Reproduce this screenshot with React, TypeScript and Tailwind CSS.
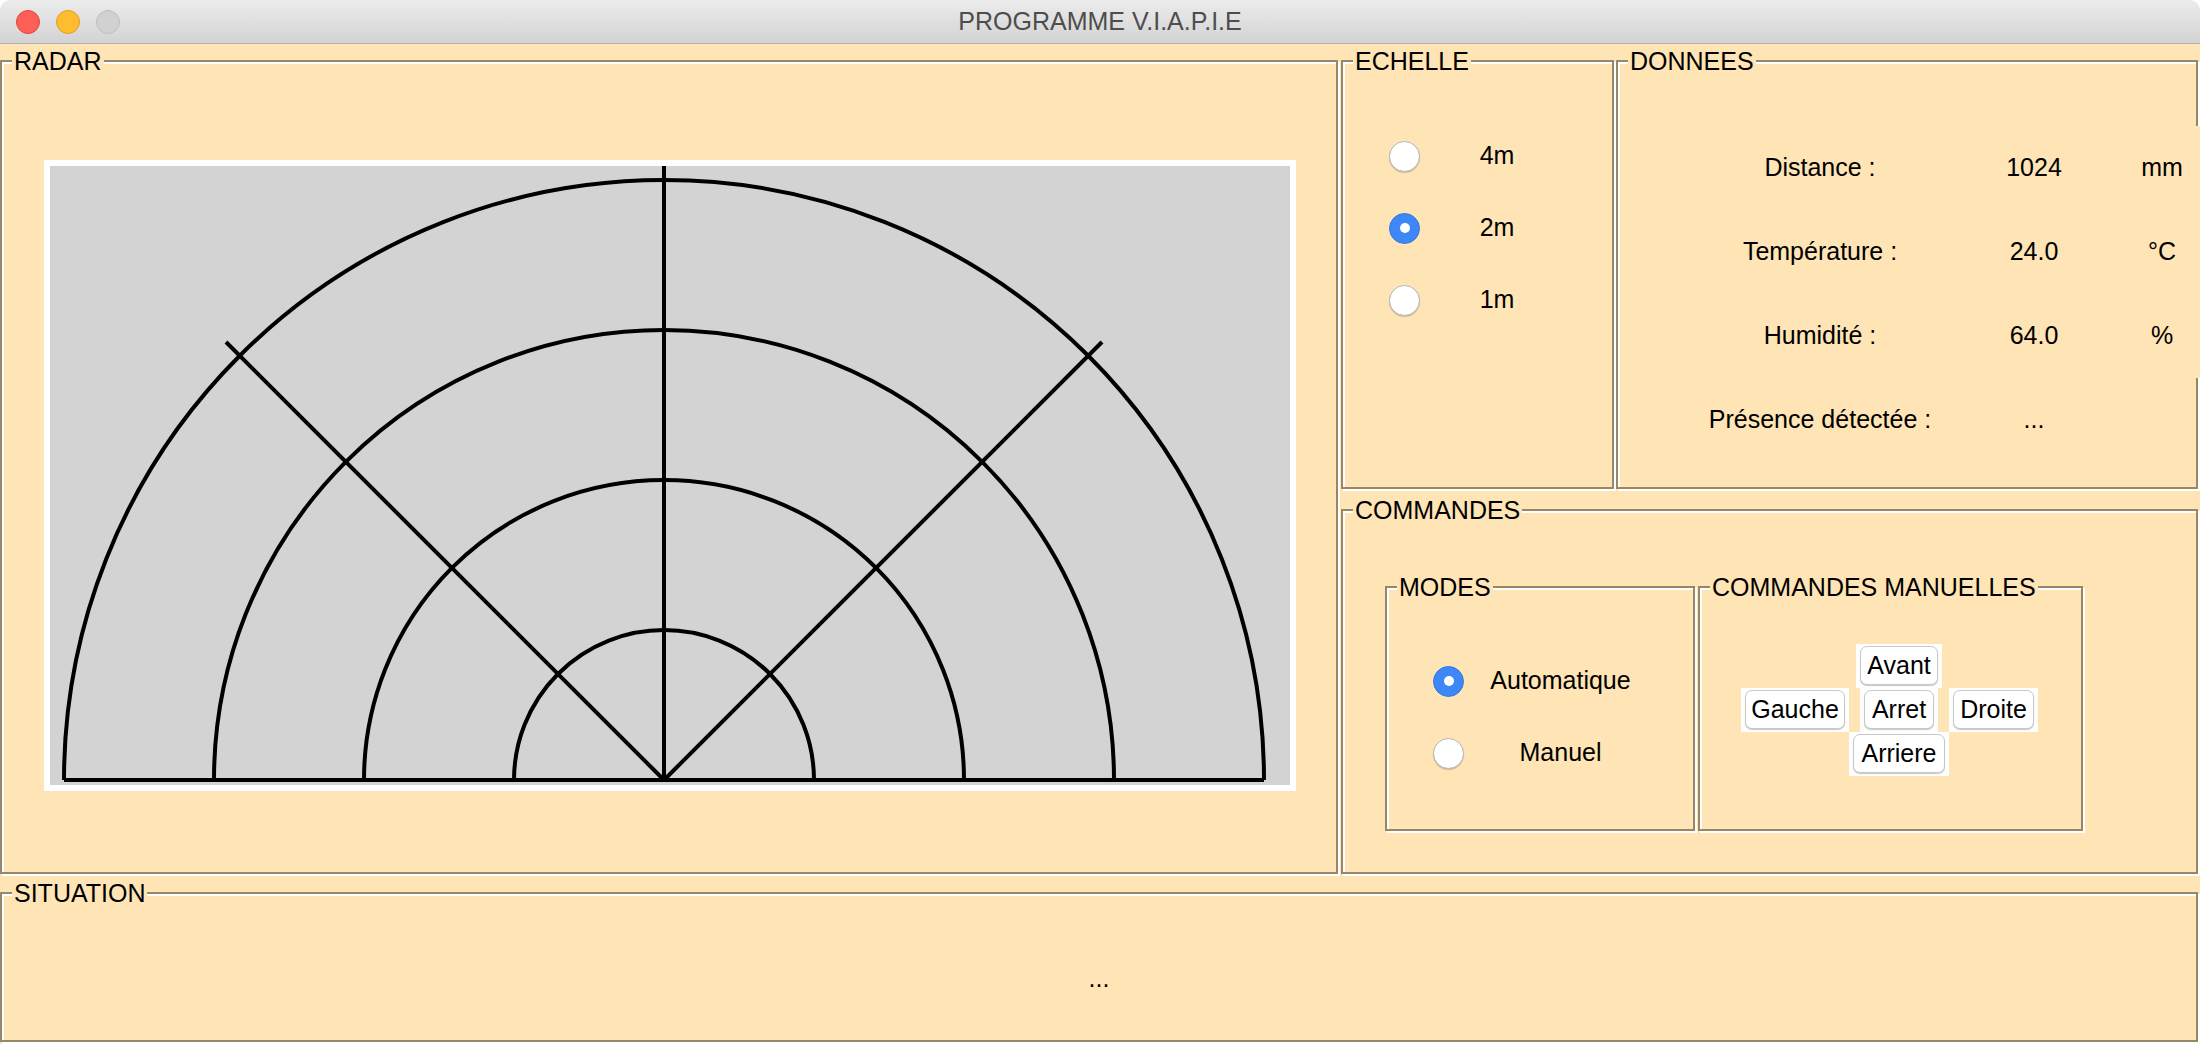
import React from "react";

function Panel({
  title,
  className,
  children,
}: {
  title: string;
  className: string;
  children?: React.ReactNode;
}) {
  return (
    <div
      className={
        "relative shrink-0 border-2 border-[#988668] shadow-[inset_2px_2px_0_0_#ffffff,2px_2px_0_0_#ffffff] " +
        className
      }
    >
      <span className="absolute left-[10px] top-[-13px] z-10 whitespace-nowrap bg-[#ffe4b5] px-[2px] text-[25px] leading-[25px]">
        {title}
      </span>
      {children}
    </div>
  );
}

function Radio({ checked }: { checked?: boolean }) {
  if (checked) {
    return (
      <div className="flex h-[31px] w-[31px] items-center justify-center rounded-full border border-[#3377e0] bg-[#3d88f6]">
        <div className="h-[10px] w-[10px] rounded-full bg-white" />
      </div>
    );
  }
  return (
    <div className="h-[31px] w-[31px] rounded-full border border-[#b8b8b8] bg-white shadow-[0_1px_1px_rgba(0,0,0,0.18)]" />
  );
}

function Btn({ label, className }: { label: string; className: string }) {
  return (
    <div className={"flex h-[44px] bg-white pb-[3px] pl-[4px] pr-[4px] pt-[2px] " + className}>
      <div className="flex flex-1 items-center justify-center rounded-[7px] border border-[#c8c8c8] bg-white shadow-[0_1px_1px_rgba(0,0,0,0.22)] text-[25px] leading-none">
        {label}
      </div>
    </div>
  );
}

function Radar() {
  const cx = 614;
  const cy = 614;
  const radii = [600, 450, 300, 150];
  return (
    <div className="h-[631px] w-[1252px] bg-white p-[6px]">
      <svg width={1240} height={619} className="block bg-[#d3d3d3]">
        {radii.map((r) => (
          <path
            key={r}
            d={`M ${cx - r} ${cy} A ${r} ${r} 0 0 1 ${cx + r} ${cy}`}
            fill="none"
            stroke="#000"
            strokeWidth={4}
          />
        ))}
        <line x1={cx} y1={cy} x2={cx} y2={0} stroke="#000" strokeWidth={4} />
        <line x1={cx} y1={cy} x2={176} y2={176} stroke="#000" strokeWidth={4} />
        <line x1={cx} y1={cy} x2={1052} y2={176} stroke="#000" strokeWidth={4} />
        <line x1={cx - 600} y1={cy} x2={cx + 600} y2={cy} stroke="#000" strokeWidth={4} />
      </svg>
    </div>
  );
}

export default function App() {
  return (
    <div className="h-[1044px] w-[2200px] overflow-hidden bg-[#ffe4b5] font-['Liberation_Sans',Arial,sans-serif] text-[25px] text-black">
      {/* title bar */}
      <div className="bg-white">
        <div className="grid h-[44px] grid-cols-[1fr_auto_1fr] items-center rounded-t-[10px] border-b border-[#b0b0b0] bg-gradient-to-b from-[#ececec] to-[#d3d3d3]">
          <div className="flex items-center gap-[16px] pl-[16px]">
            <div className="h-[24px] w-[24px] rounded-full border border-[#e1453f] bg-[#fe5f57]" />
            <div className="h-[24px] w-[24px] rounded-full border border-[#dfa024] bg-[#febc2e]" />
            <div className="h-[24px] w-[24px] rounded-full border border-[#bdbdbd] bg-[#d1d1d1]" />
          </div>
          <div className="text-[25px] leading-none text-[#4d4d4d]">PROGRAMME V.I.A.P.I.E</div>
          <div />
        </div>
      </div>

      <div className="pt-[16px]">
        <div className="flex items-start">
          {/* RADAR */}
          <Panel title="RADAR" className="h-[814px] w-[1338px]">
            <div className="pl-[42px] pt-[98px]">
              <Radar />
            </div>
          </Panel>

          {/* right column */}
          <div className="ml-[3px] flex w-[857px] shrink-0 flex-col">
            <div className="flex">
              <Panel title="ECHELLE" className="h-[429px] w-[273px]">
                <div className="grid grid-cols-[31px_154px] auto-rows-[72px] items-center pl-[46px] pt-[58px]">
                  <Radio />
                  <div className="text-center">4m</div>
                  <Radio checked />
                  <div className="text-center">2m</div>
                  <Radio />
                  <div className="text-center">1m</div>
                </div>
              </Panel>
              <Panel title="DONNEES" className="ml-[2px] h-[429px] w-[582px]">
                <div className="grid grid-cols-[248px_180px_76px] auto-rows-[84px] pl-[78px] pt-[64px]">
                  <div className="flex items-center justify-center">Distance :</div>
                  <div className="flex items-center justify-center">1024</div>
                  <div className="flex items-center justify-center bg-[#ffe4b5]">mm</div>
                  <div className="flex items-center justify-center">Température :</div>
                  <div className="flex items-center justify-center">24.0</div>
                  <div className="flex items-center justify-center bg-[#ffe4b5]">°C</div>
                  <div className="flex items-center justify-center">Humidité :</div>
                  <div className="flex items-center justify-center">64.0</div>
                  <div className="flex items-center justify-center bg-[#ffe4b5]">%</div>
                  <div className="flex items-center justify-center">Présence détectée :</div>
                  <div className="flex items-center justify-center">...</div>
                  <div />
                </div>
              </Panel>
            </div>

            <Panel title="COMMANDES" className="mt-[20px] h-[365px] w-[857px]">
              <div className="flex items-start pl-[42px] pt-[75px]">
                <Panel title="MODES" className="h-[245px] w-[310px]">
                  <div className="grid grid-cols-[31px_193px] auto-rows-[72px] items-center pl-[46px] pt-[57px]">
                    <Radio checked />
                    <div className="text-center">Automatique</div>
                    <Radio />
                    <div className="text-center">Manuel</div>
                  </div>
                </Panel>
                <Panel title="COMMANDES MANUELLES" className="ml-[3px] h-[245px] w-[385px]">
                  <div className="grid grid-cols-[108px_100px_89px] grid-rows-[44px_44px_44px] pl-[41px] pt-[56px]">
                    <Btn label="Avant" className="col-start-2 row-start-1 w-[86px] justify-self-center" />
                    <Btn label="Gauche" className="col-start-1 row-start-2 w-[108px] justify-self-center" />
                    <Btn label="Arret" className="col-start-2 row-start-2 w-[78px] justify-self-center" />
                    <Btn label="Droite" className="col-start-3 row-start-2 w-[89px] justify-self-center" />
                    <Btn label="Arriere" className="col-start-2 row-start-3 w-[100px] justify-self-center" />
                  </div>
                </Panel>
              </div>
            </Panel>
          </div>
        </div>

        {/* SITUATION */}
        <Panel title="SITUATION" className="mt-[18px] h-[150px] w-[2198px]">
          <div className="flex h-full items-center justify-center pt-[24px]">...</div>
        </Panel>
      </div>
    </div>
  );
}
